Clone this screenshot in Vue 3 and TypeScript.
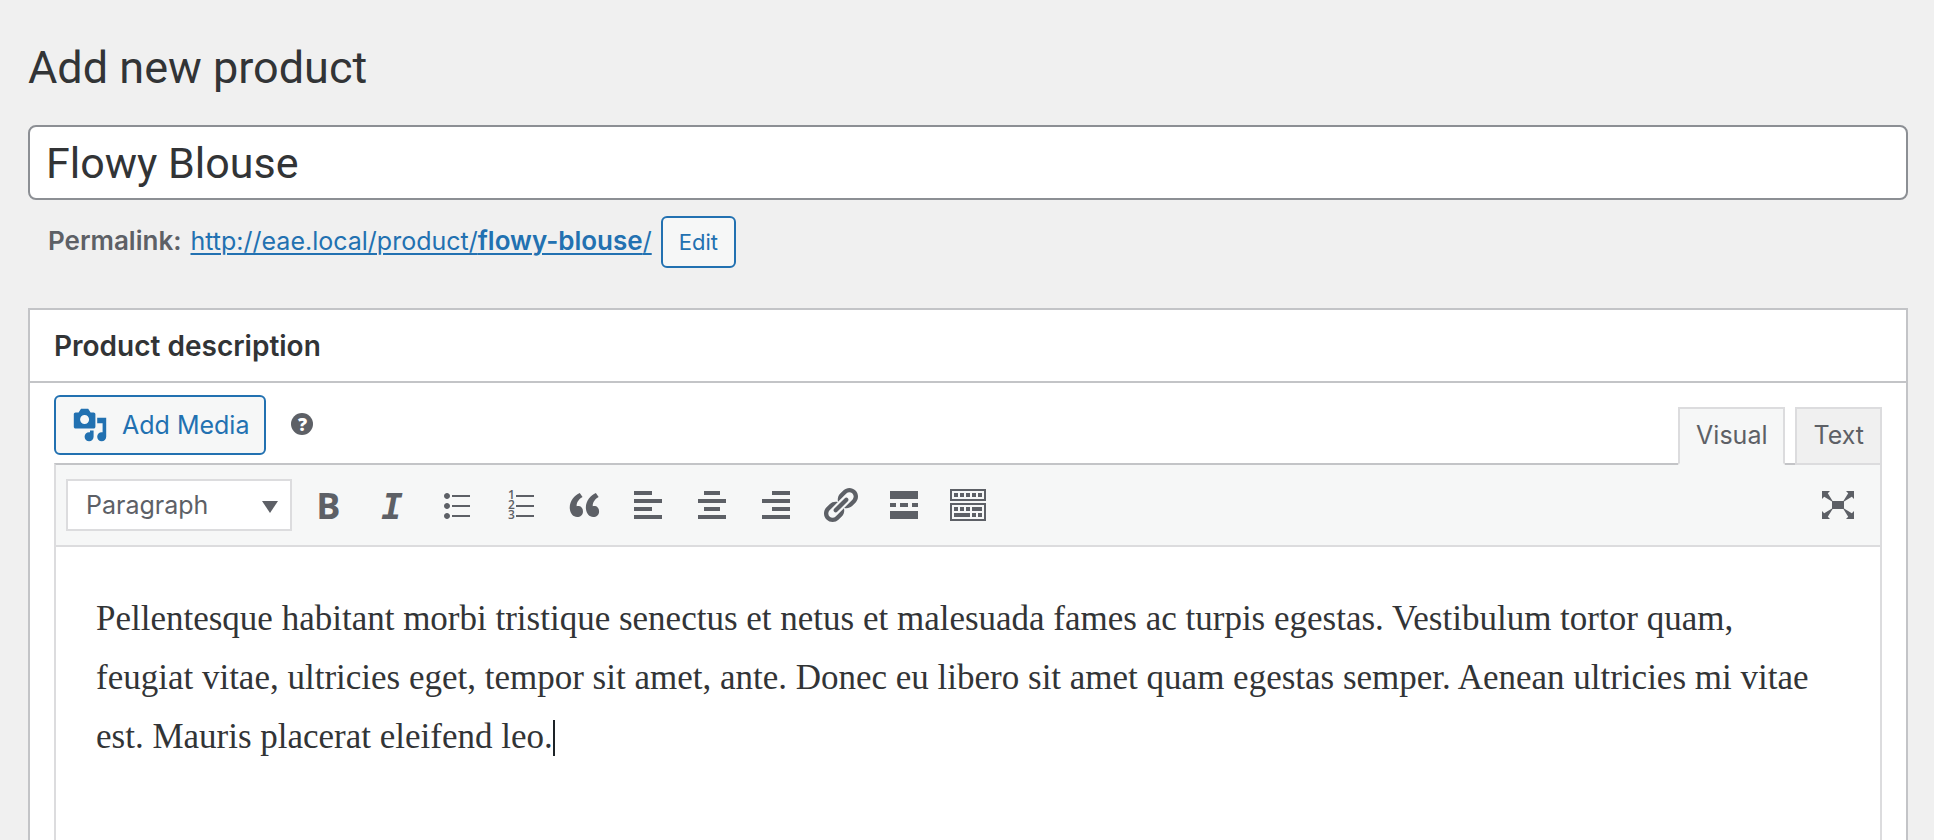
<script setup lang="ts">
import { ref } from 'vue'

interface Tool {
  name: string
  path?: string
}

const title = ref('Flowy Blouse')
const format = ref('Paragraph')
const mode = ref<'Visual' | 'Text'>('Visual')

const tools: Tool[] = [
  { name: 'Bold' },
  { name: 'Italic' },
  {
    name: 'Bulleted list',
    path: 'M5.5 7C4.67 7 4 6.33 4 5.5 4 4.68 4.67 4 5.5 4 6.32 4 7 4.68 7 5.5 7 6.33 6.32 7 5.5 7zM8 5h9v1H8V5zm-2.5 7c-.83 0-1.5-.67-1.5-1.5C4 9.68 4.67 9 5.5 9c.82 0 1.5.68 1.5 1.5 0 .83-.68 1.5-1.5 1.5zM8 10h9v1H8v-1zm-2.5 7c-.83 0-1.5-.67-1.5-1.5 0-.82.67-1.5 1.5-1.5.82 0 1.5.68 1.5 1.5 0 .83-.68 1.5-1.5 1.5zM8 15h9v1H8v-1z',
  },
  { name: 'Numbered list', path: 'M8 5h9v1H8V5zM8 10h9v1H8v-1zM8 15h9v1H8v-1z' },
  {
    name: 'Blockquote',
    path: 'M9.49 13.22c0-.74-.2-1.38-.61-1.9-.62-.78-1.83-.88-2.53-.72-.29-1.65 1.11-3.75 2.92-4.65L7.88 4c-2.73 1.3-5.42 4.28-4.96 8.05C3.21 14.43 4.59 16 6.54 16c.85 0 1.56-.25 2.12-.75s.83-1.18.83-2.03zm8.05 0c0-.74-.2-1.38-.61-1.9-.63-.78-1.83-.88-2.53-.72-.29-1.65 1.11-3.75 2.92-4.65L15.93 4c-2.73 1.3-5.41 4.28-4.95 8.05.29 2.38 1.66 3.95 3.61 3.95.85 0 1.56-.25 2.12-.75s.83-1.18.83-2.03z',
  },
  { name: 'Align left', path: 'M12 5V3H3v2h9zm5 4V7H3v2h14zm-5 4v-2H3v2h9zm5 4v-2H3v2h14z' },
  { name: 'Align center', path: 'M14 5V3H6v2h8zm3 4V7H3v2h14zm-3 4v-2H6v2h8zm3 4v-2H3v2h14z' },
  { name: 'Align right', path: 'M17 5V3H8v2h9zm0 4V7H3v2h14zm0 4v-2H8v2h9zm0 4v-2H3v2h14z' },
  {
    name: 'Insert link',
    path: 'M17.74 2.76c1.68 1.69 1.68 4.41 0 6.1l-1.53 1.52c-1.12 1.12-2.7 1.47-4.14 1.09l2.62-2.61.76-.77.76-.76c.84-.84.84-2.2 0-3.04-.84-.85-2.2-.85-3.04 0l-.77.76-3.38 3.38c-.37-1.44-.02-3.02 1.1-4.14l1.52-1.53c1.69-1.68 4.42-1.68 6.1 0zM8.59 13.43l5.34-5.34c.42-.42.42-1.1 0-1.52-.44-.43-1.13-.39-1.53 0l-5.33 5.34c-.42.42-.42 1.1 0 1.52.44.43 1.13.39 1.52 0zm-.76 2.29l4.14-4.15c.38 1.44.03 3.02-1.09 4.14l-1.52 1.53c-1.69 1.68-4.41 1.68-6.1 0-1.68-1.68-1.68-4.42 0-6.1l1.53-1.52c1.12-1.12 2.7-1.47 4.14-1.1l-4.14 4.15c-.85.84-.85 2.2 0 3.05.84.84 2.2.84 3.04 0z',
  },
  { name: 'Read more', path: 'M17 7V3H3v4h14zM6 11V9H3v2h3zm6 0V9H8v2h4zm5 0V9h-3v2h3zm0 6v-4H3v4h14z' },
  {
    name: 'Toolbar toggle',
    path: 'M19 2v6H1V2h18zm-1 5V3H2v4h16zM5 4v2H3V4h2zm3 0v2H6V4h2zm3 0v2H9V4h2zm3 0v2h-2V4h2zm3 0v2h-2V4h2zm2 5v9H1V9h18zm-1 8v-7H2v7h16zM5 11v2H3v-2h2zm3 0v2H6v-2h2zm3 0v2H9v-2h2zm6 0v2h-5v-2h5zm-6 3v2H3v-2h8zm3 0v2h-2v-2h2zm3 0v2h-2v-2h2z',
  },
]
</script>

<template>
  <main class="page">
    <h1 class="heading">Add new product</h1>

    <input v-model="title" class="title" type="text" aria-label="Product name" />

    <div class="permalink">
      <strong>Permalink:</strong>
      <a href="#">http://eae.local/product/<b>flowy-blouse</b>/</a>
      <button type="button" class="button edit">Edit</button>
    </div>

    <section class="postbox">
      <h2 class="postbox-title">Product description</h2>

      <div class="postbox-body">
        <div class="media-row">
          <button type="button" class="button media">
            <svg viewBox="0 0 20 20" width="36" height="36" aria-hidden="true">
              <path d="M13 11V4c0-.55-.45-1-1-1h-1.67L9 1H5L3.67 3H2c-.55 0-1 .45-1 1v7c0 .55.45 1 1 1h10c.55 0 1-.45 1-1zM7 4.5c1.38 0 2.5 1.12 2.5 2.5S8.38 9.5 7 9.5 4.5 8.38 4.5 7 5.62 4.5 7 4.5zM14 6h5v10.5c0 1.38-1.12 2.5-2.5 2.5S14 17.88 14 16.5s1.12-2.5 2.5-2.5c.17 0 .34.02.5.05V9h-3V6zm-4 8.05V13h2v3.5c0 1.38-1.12 2.5-2.5 2.5S7 17.88 7 16.5 8.12 14 9.5 14c.17 0 .34.02.5.05z" />
            </svg>
            Add Media
          </button>
          <button type="button" class="help" aria-label="Help">?</button>
          <div class="tabs">
            <button type="button" class="tab" :class="{ active: mode === 'Visual' }" @click="mode = 'Visual'">Visual</button>
            <button type="button" class="tab" :class="{ active: mode === 'Text' }" @click="mode = 'Text'">Text</button>
          </div>
        </div>

        <div class="editor">
          <div class="toolbar" role="toolbar" aria-label="Formatting">
            <div class="format">
              <select v-model="format" aria-label="Format">
                <option>Paragraph</option>
                <option>Heading 1</option>
                <option>Heading 2</option>
                <option>Preformatted</option>
              </select>
              <svg viewBox="0 0 16 12" width="16" height="12" aria-hidden="true"><path d="M0 0h16L8 12z" /></svg>
            </div>

            <div class="tools">
              <button v-for="tool in tools" :key="tool.name" type="button" class="tool" :aria-label="tool.name">
                <svg viewBox="0 0 20 20" width="40" height="40" aria-hidden="true">
                  <text v-if="tool.name === 'Bold'" class="glyph-bold" x="10.2" y="17" text-anchor="middle">B</text>
                  <text v-else-if="tool.name === 'Italic'" class="glyph-italic" x="10" y="17" text-anchor="middle">I</text>
                  <path v-if="tool.path" :d="tool.path" />
                  <text v-if="tool.name === 'Numbered list'" class="glyph-number">
                    <tspan v-for="n in 3" :key="n" x="4" :y="2 + n * 5">{{ n }}</tspan>
                  </text>
                </svg>
              </button>
            </div>

            <button type="button" class="tool" aria-label="Distraction-free writing mode">
              <svg viewBox="0 0 20 20" width="40" height="40" aria-hidden="true">
                <path d="M7 8h6v4H7z" />
                <path d="M2 3h4L4.9 4.1 7.3 8l-.3.3-3.9-2.4L2 7z" />
                <path d="M18 3h-4l1.1 1.1L12.7 8l.3.3 3.9-2.4L18 7z" />
                <path d="M2 17h4l-1.1-1.1L7.3 12l-.3-.3-3.9 2.4L2 13z" />
                <path d="M18 17h-4l1.1-1.1-2.4-3.9.3-.3 3.9 2.4L18 13z" />
              </svg>
            </button>
          </div>

          <div class="content" contenteditable="true" role="textbox" aria-multiline="true" aria-label="Product description" spellcheck="false">
            <p>Pellentesque habitant morbi tristique senectus et netus et malesuada fames ac turpis egestas. Vestibulum tortor quam, feugiat vitae, ultricies eget, tempor sit amet, ante. Donec eu libero sit amet quam egestas semper. Aenean ultricies mi vitae est. Mauris placerat eleifend leo.<span class="caret"></span></p>
          </div>
        </div>
      </div>
    </section>
  </main>
</template>

<style>
body {
  margin: 0;
  background: #f0f0f0;
}
</style>

<style scoped>
.page {
  box-sizing: border-box;
  min-height: 100vh;
  padding: 40px 26px 0 28px;
  display: flex;
  flex-direction: column;
  background: #f0f0f0;
  color: #323436;
  font-family: Inter, "Liberation Sans", sans-serif;
  font-size: 25px;
}

button,
input,
select {
  margin: 0;
  font-family: inherit;
}

svg {
  display: block;
  flex: none;
  overflow: visible;
  fill: currentColor;
}

.heading {
  margin: 0 0 29px;
  font-family: Roboto, sans-serif;
  font-size: 45px;
  font-weight: 400;
  line-height: 56px;
}

.title {
  box-sizing: border-box;
  width: 100%;
  height: 75px;
  padding: 0 16px;
  border: 2px solid #8c8f94;
  border-radius: 8px;
  background: #fff;
  color: inherit;
  font-family: Roboto, sans-serif;
  font-size: 43px;
}

.permalink {
  display: flex;
  align-items: center;
  gap: 9px;
  margin: 16px 0 40px;
  padding-left: 20px;
  color: #5d6066;
  line-height: 32px;
}

.permalink strong,
.permalink b {
  font-size: 26px;
  font-weight: 600;
}

.permalink strong,
.permalink a {
  padding-bottom: 2px;
}

.permalink a {
  color: #2271b1;
  text-underline-offset: 3px;
  text-decoration-thickness: 2px;
}

.button {
  box-sizing: border-box;
  border: 2px solid #2271b1;
  border-radius: 6px;
  background: #f6f7f7;
  color: #2271b1;
}

.edit {
  height: 52px;
  padding: 0 16px;
  font-size: 22px;
}

.postbox {
  flex: 1;
  display: flex;
  flex-direction: column;
  border: 2px solid #c3c4c7;
  border-bottom: 0;
  background: #fff;
}

.postbox-title {
  margin: 0;
  padding: 2px 24px 0;
  border-bottom: 2px solid #c3c4c7;
  font-size: 28px;
  font-weight: 600;
  line-height: 69px;
}

.postbox-body {
  flex: 1;
  display: flex;
  flex-direction: column;
  padding: 12px 24px 0;
}

.media-row {
  display: flex;
  align-items: flex-start;
}

.media {
  display: flex;
  align-items: center;
  gap: 14px;
  height: 60px;
  padding: 0 15px 0 16px;
  font-size: 25px;
}

.help {
  width: 22px;
  height: 22px;
  margin: 18px 0 0 25px;
  padding: 0;
  border: 0;
  border-radius: 50%;
  background: #5d6066;
  color: #fff;
  font-family: "Open Sans", sans-serif;
  font-size: 18px;
  font-weight: 800;
  line-height: 22px;
}

.tabs {
  display: flex;
  gap: 10px;
  margin: 12px 0 -2px auto;
  position: relative;
}

.tab {
  box-sizing: border-box;
  height: 58px;
  padding: 0 16px 2px;
  border: 2px solid #dcdcde;
  background: #f0f0f0;
  color: #5d6066;
  font-size: 25px;
}

.tab.active {
  border-bottom-color: #f6f7f7;
  background: #f6f7f7;
}

.editor {
  flex: 1;
  border: 2px solid #dcdcde;
  border-top-color: #c3c4c7;
  border-bottom: 0;
}

.toolbar {
  display: flex;
  align-items: center;
  height: 80px;
  padding: 0 22px 0 10px;
  border-bottom: 2px solid #dcdcde;
  background: #f6f7f7;
  color: #5d6066;
}

.format {
  display: grid;
  align-items: center;
  margin-right: 16px;
}

.format select,
.format svg {
  grid-area: 1 / 1;
}

.format select {
  box-sizing: border-box;
  width: 226px;
  height: 52px;
  padding: 0 18px;
  border: 2px solid #dcdcde;
  border-radius: 0;
  background: #fff;
  color: #5d6066;
  font-size: 25px;
  appearance: none;
}

.format svg {
  justify-self: end;
  margin: 4px 14px 0 0;
  pointer-events: none;
}

.tools {
  display: flex;
  gap: 24px;
  margin-right: auto;
}

.tool {
  padding: 0;
  border: 0;
  background: none;
  color: inherit;
}

.glyph-bold {
  font: 700 18px "Open Sans", sans-serif;
}

.glyph-italic {
  font: italic 700 18px "DejaVu Sans Mono", monospace;
}

.glyph-number {
  font: 600 6px "Open Sans", sans-serif;
}

.content {
  padding: 42px 50px 42px 40px;
  outline: 0;
  font-family: "Liberation Serif", serif;
  font-size: 35px;
  line-height: 59px;
}

.content p {
  margin: 0;
}

.caret {
  display: inline-block;
  width: 2px;
  height: 36px;
  background: #1d2327;
  vertical-align: -8px;
}
</style>
